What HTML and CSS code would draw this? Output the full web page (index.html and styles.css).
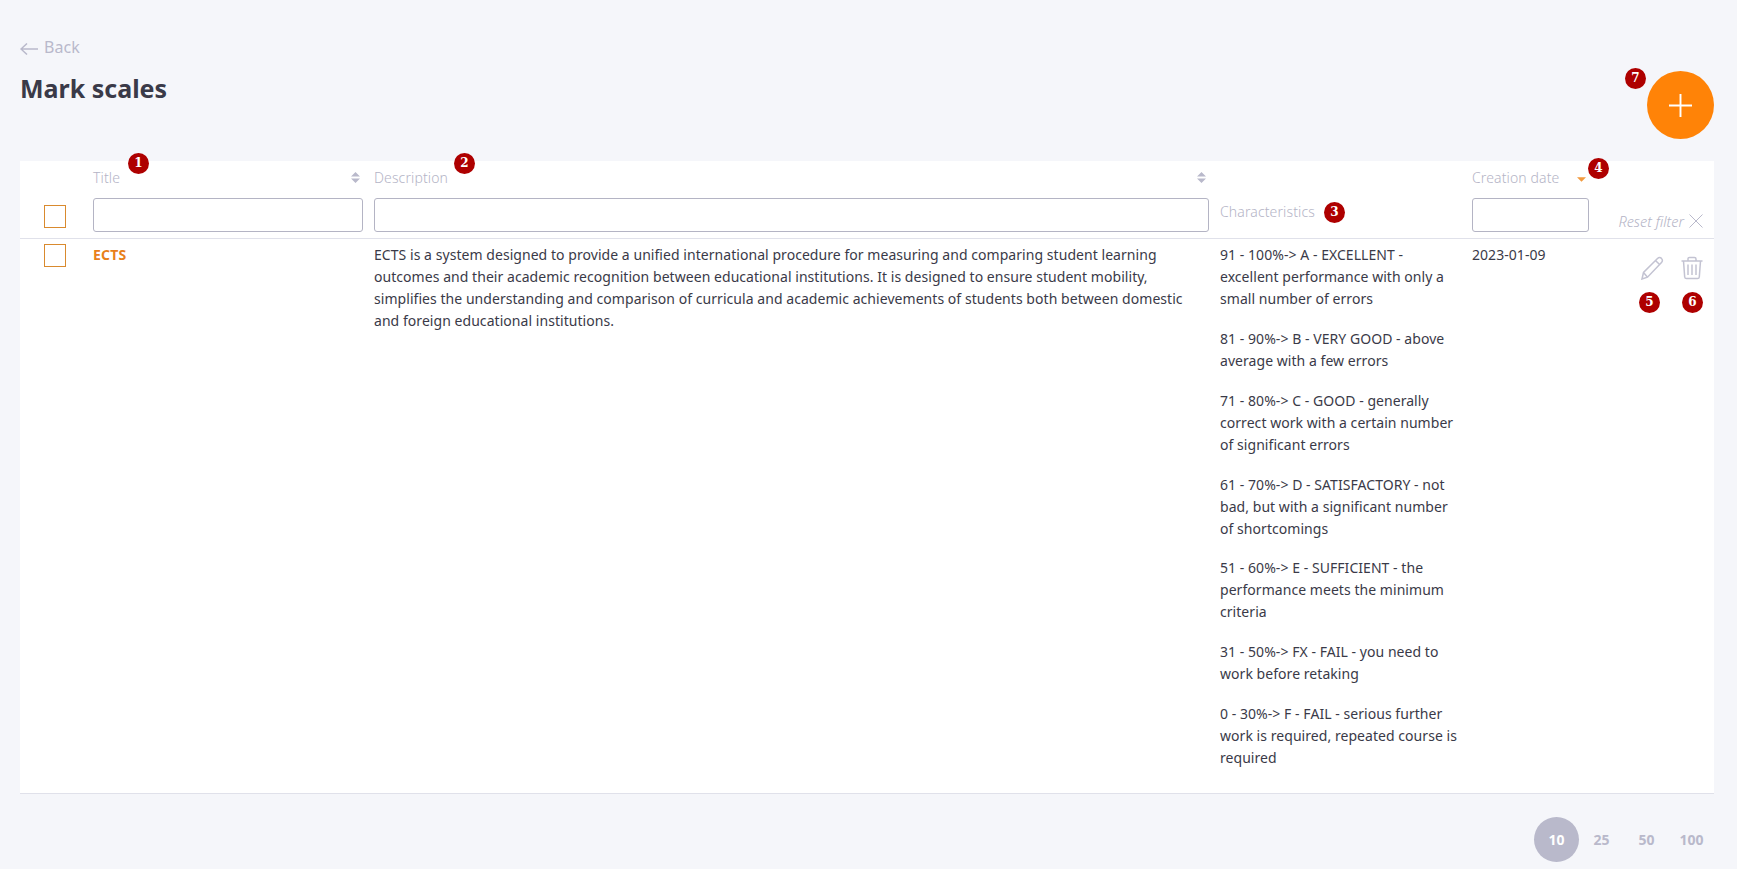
FILE: index.html
```html
<!DOCTYPE html>
<html lang="en">
<head>
<meta charset="utf-8">
<title>Mark scales</title>
<link rel="stylesheet" href="styles.css">
</head>
<body>
<main class="page">
  <header class="top">
    <div class="heading">
      <a class="back"><svg class="back-icon" viewBox="0 0 18 12"><path d="M18 6H1M7 .5 1 6l6 5.500"/></svg>Back</a>
      <h1 class="title">Mark scales</h1>
    </div>
    <button class="fab"><svg viewBox="0 0 24 24"><path d="M12 0v24M0 12h24"/></svg><span class="badge badge-7">7</span></button>
  </header>

  <section class="table">
    <div class="head">
      <div class="cell-check"><span class="check"></span></div>
      <div class="head-col">
        <div class="label">Title<svg class="sort" viewBox="0 0 10 12"><path d="M5 0l5 5H0zM5 12 0 7h10z"/></svg><span class="badge badge-1">1</span></div>
        <input class="filter">
      </div>
      <div class="head-col col-desc">
        <div class="label">Description<svg class="sort" viewBox="0 0 10 12"><path d="M5 0l5 5H0zM5 12 0 7h10z"/></svg><span class="badge badge-2">2</span></div>
        <input class="filter">
      </div>
      <div class="head-col col-char">
        <div class="label label-char">Characteristics<span class="badge badge-3">3</span></div>
      </div>
      <div class="head-col">
        <div class="label">Creation date<svg class="sort-down" viewBox="0 0 10 5"><path d="M0 0h10L5 5z"/></svg><span class="badge badge-4">4</span></div>
        <input class="filter">
      </div>
      <div class="reset">Reset filter<svg class="reset-x" viewBox="0 0 14 14"><path d="M.5.5l13 13M13.500.5l-13 13"/></svg></div>
    </div>

    <div class="row">
      <div class="cell-check"><span class="check"></span></div>
      <a class="name">ECTS</a>
      <p class="desc">ECTS is a system designed to provide a unified international procedure for measuring and comparing student learning outcomes and their academic recognition between educational institutions. It is designed to ensure student mobility, simplifies the understanding and comparison of curricula and academic achievements of students both between domestic and foreign educational institutions.</p>
      <div class="chars">
        <p>91 - 100%-&gt; A - EXCELLENT - excellent performance with only a small number of errors</p>
        <p>81 - 90%-&gt; B - VERY GOOD - above average with a few errors</p>
        <p>71 - 80%-&gt; C - GOOD - generally correct work with a certain number of significant errors</p>
        <p>61 - 70%-&gt; D - SATISFACTORY - not bad, but with a significant number of shortcomings</p>
        <p>51 - 60%-&gt; E - SUFFICIENT - the performance meets the minimum criteria</p>
        <p>31 - 50%-&gt; FX - FAIL - you need to work before retaking</p>
        <p>0 - 30%-&gt; F - FAIL - serious further work is required, repeated course is required</p>
      </div>
      <div class="date">2023-01-09</div>
      <div class="actions">
        <span class="action"><svg class="icon" viewBox="0 0 24 24"><path d="M2 23l1.500-6.500L17.500 2.500c1.300-1.300 3-1.300 4 0 1.200 1.100 1.200 2.700 0 4L7.500 21.200zM3.500 16.500l4 4.700M15.500 4.500l4.300 4.200"/></svg><span class="badge badge-5">5</span></span>
        <span class="action"><svg class="icon" viewBox="0 0 24 24"><path d="M1.500 5h21M8 5V3c0-1 .6-1.600 1.500-1.600h5C15.400 1.400 16 2 16 3v2M3.500 5l1.200 16c.1 1 .8 1.600 1.800 1.600h11c1 0 1.700-.6 1.800-1.600L20.500 5M8 8.500v10.500M12 8.500v10.500M16 8.500v10.500"/></svg><span class="badge badge-6">6</span></span>
      </div>
    </div>
  </section>

  <nav class="pager">
    <span class="size current">10</span>
    <span class="size">25</span>
    <span class="size">50</span>
    <span class="size">100</span>
  </nav>
</main>
</body>
</html>
```

FILE: styles.css
```css
* { box-sizing: border-box; }
html, body { margin: 0; height: 100%; }
body {
  background: #f5f6fa;
  color: #3a3a48;
  font-family: "Noto Sans", "Open Sans", sans-serif;
  font-size: 14px;
  line-height: 22px;
  letter-spacing: .05px;
  overflow: hidden;
}
p { margin: 0; }
.page { padding: 0 23px 0 20px; height: 869px; }

.top { display: flex; justify-content: space-between; align-items: flex-start; height: 161px; padding-top: 36px; }
.back { display: flex; align-items: center; gap: 6px; color: #b9b9cb; font-size: 16px; line-height: 22px; }
.back-icon { width: 18px; height: 12px; margin-top: 3px; fill: none; stroke: #b9b9cb; stroke-width: 1.5; }
.title { margin: 12px 0 0; font-size: 25px; line-height: 36px; font-weight: 700; color: #3a3a48; letter-spacing: 0; }
.fab { position: relative; width: 67px; height: 68px; margin-top: 35px; border: 0; border-radius: 50%; background: #ff8307; padding: 0; display: flex; align-items: center; justify-content: center; }
.fab svg { width: 23px; height: 23px; fill: none; stroke: #fff; stroke-width: 2; }

.table { background: #fff; border-bottom: 1px solid #e0e1ea; height: 633px; }
.head, .row { display: grid; grid-template-columns: 73px 281px 846px 252px 128px 114px; }
.head { height: 78px; border-bottom: 1px solid #e0e1ea; }
.head > .cell-check { padding: 44px 0 0 24px; }
.head-col { display: flex; flex-direction: column; }
.label { position: relative; display: flex; justify-content: space-between; align-items: center; height: 37px; padding: 0 14px 4px 0; color: #b4b4c6; font-size: 14px; font-weight: 300; letter-spacing: .12px; }
.col-char .label-char { margin-top: 37px; height: 30px; padding-bottom: 2px; justify-content: flex-start; }
.filter { width: calc(100% - 11px); height: 34px; border: 1px solid #b4b4c4; border-radius: 3px; background: #fff; padding: 0 8px; outline: 0; }
.sort { width: 9px; height: 11px; fill: #b9b9cb; }
.sort-down { position: absolute; left: 105px; top: 16px; width: 9px; height: 5px; fill: #f29a3e; }

.check { display: block; width: 22px; height: 23px; border: 1px solid #d98a2e; background: #fff; }
.reset { align-self: end; justify-self: end; display: flex; align-items: center; gap: 5px; padding: 0 11px 6px 0; color: #b4b4c6; font-style: italic; font-weight: 300; font-size: 14.500px; letter-spacing: 0; white-space: nowrap; }
.reset-x { width: 14px; height: 14px; fill: none; stroke: #b9b9cb; stroke-width: 1; }

.row { padding-top: 5px; }
.row > .cell-check { padding-left: 24px; }
.name { color: #e8801a; font-weight: 700; line-height: 22px; letter-spacing: .2px; }
.desc { padding-right: 12px; }
.chars { padding-right: 12px; }
.chars p { margin-bottom: 17.850px; }
.actions { position: relative; display: flex; justify-content: flex-end; gap: 16px; padding: 12px 10px 0 0; }
.action { position: relative; display: block; height: 24px; }
.icon { display: block; width: 24px; height: 24px; fill: none; stroke: #c3c3d2; stroke-width: 1.500; }

.badge { position: absolute; width: 21px; height: 21px; border-radius: 50%; background: #ae0000; color: #fff; font-family: "DejaVu Serif", serif; font-weight: 700; font-size: 12px; line-height: 21px; text-align: center; }
.badge-1 { left: 35px; top: -8px; }
.badge-2 { left: 80px; top: -8px; }
.badge-3 { left: 104px; top: 4px; }
.badge-4 { left: 116px; top: -3px; }
.badge-5 { left: -1px; top: 36px; }
.badge-6 { left: 2px; top: 36px; }
.badge-7 { left: -22px; top: -3px; }

.pager { display: flex; justify-content: flex-end; align-items: center; gap: 0; margin-top: 23px; }
.size { width: 45px; height: 45px; border-radius: 50%; display: flex; align-items: center; justify-content: center; color: #b9b9cb; font-weight: 700; font-size: 14px; }
.current { background: #b9b9cb; color: #fff; }
```
